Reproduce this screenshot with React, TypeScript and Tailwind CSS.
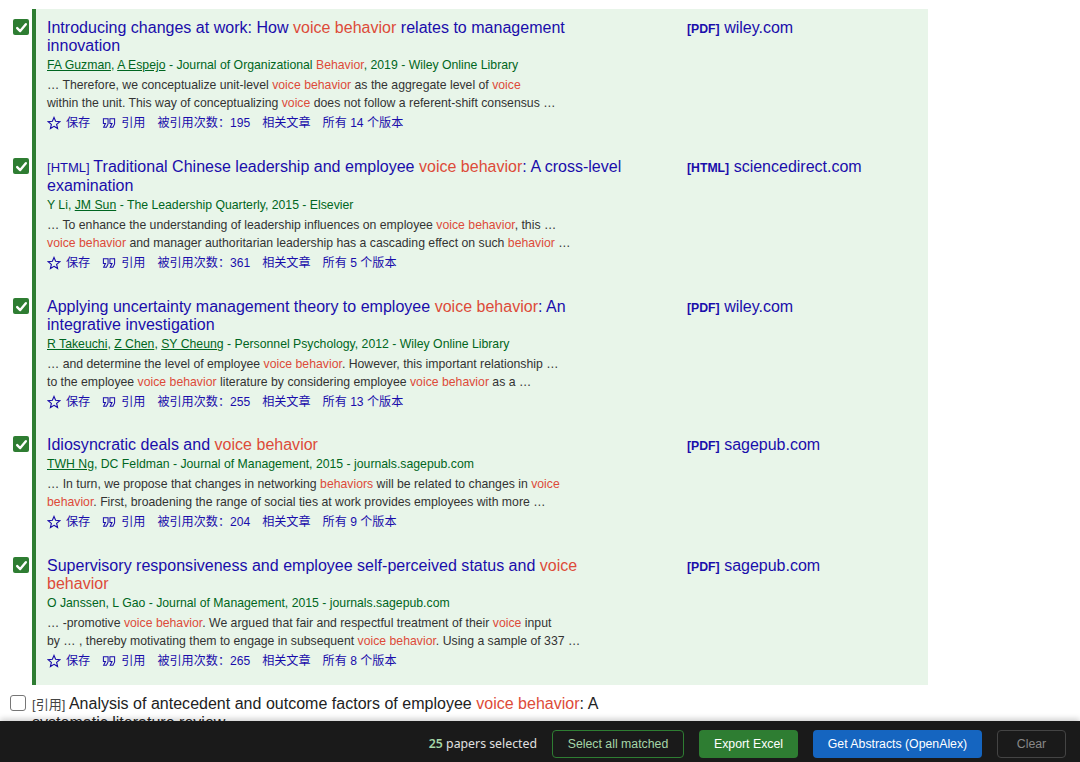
const FONT = "font-['Liberation_Sans','Noto_Sans_CJK_SC',sans-serif]";

type Part = string | { hl: string } | { u: string };

interface Paper {
  tag?: string;
  title: Part[];
  authors: Part[];
  line1: Part[];
  line2: Part[];
  cited: number;
  versions: number;
  kind: string;
  site: string;
  pad: string;
}

const papers: Paper[] = [
  {
    title: ["Introducing changes at work: How ", { hl: "voice behavior" }, " relates to management innovation"],
    authors: [{ u: "FA Guzman" }, ", ", { u: "A Espejo" }, " - Journal of Organizational ", { hl: "Behavior" }, ", 2019 - Wiley Online Library"],
    line1: ["… Therefore, we conceptualize unit-level ", { hl: "voice behavior" }, " as the aggregate level of ", { hl: "voice" }],
    line2: ["within the unit. This way of conceptualizing ", { hl: "voice" }, " does not follow a referent-shift consensus …"],
    cited: 195,
    versions: 14,
    kind: "[PDF]",
    site: "wiley.com",
    pad: "pb-[16px]",
  },
  {
    tag: "[HTML]",
    title: ["Traditional Chinese leadership and employee ", { hl: "voice behavior" }, ": A cross-level examination"],
    authors: ["Y Li, ", { u: "JM Sun" }, " - The Leadership Quarterly, 2015 - Elsevier"],
    line1: ["… To enhance the understanding of leadership influences on employee ", { hl: "voice behavior" }, ", this …"],
    line2: [{ hl: "voice behavior" }, " and manager authoritarian leadership has a cascading effect on such ", { hl: "behavior" }, " …"],
    cited: 361,
    versions: 5,
    kind: "[HTML]",
    site: "sciencedirect.com",
    pad: "pb-[16px]",
  },
  {
    title: ["Applying uncertainty management theory to employee ", { hl: "voice behavior" }, ": An integrative investigation"],
    authors: [{ u: "R Takeuchi" }, ", ", { u: "Z Chen" }, ", ", { u: "SY Cheung" }, " - Personnel Psychology, 2012 - Wiley Online Library"],
    line1: ["… and determine the level of employee ", { hl: "voice behavior" }, ". However, this important relationship …"],
    line2: ["to the employee ", { hl: "voice behavior" }, " literature by considering employee ", { hl: "voice behavior" }, " as a …"],
    cited: 255,
    versions: 13,
    kind: "[PDF]",
    site: "wiley.com",
    pad: "pb-[15px]",
  },
  {
    title: ["Idiosyncratic deals and ", { hl: "voice behavior" }],
    authors: [{ u: "TWH Ng" }, ", DC Feldman - Journal of Management, 2015 - journals.sagepub.com"],
    line1: ["… In turn, we propose that changes in networking ", { hl: "behaviors" }, " will be related to changes in ", { hl: "voice" }],
    line2: [{ hl: "behavior" }, ". First, broadening the range of social ties at work provides employees with more …"],
    cited: 204,
    versions: 9,
    kind: "[PDF]",
    site: "sagepub.com",
    pad: "pb-[16px]",
  },
  {
    title: ["Supervisory responsiveness and employee self-perceived status and ", { hl: "voice behavior" }],
    authors: ["O Janssen, L Gao - Journal of Management, 2015 - journals.sagepub.com"],
    line1: ["… -promotive ", { hl: "voice behavior" }, ". We argued that fair and respectful treatment of their ", { hl: "voice" }, " input"],
    line2: ["by … , thereby motivating them to engage in subsequent ", { hl: "voice behavior" }, ". Using a sample of 337 …"],
    cited: 265,
    versions: 8,
    kind: "[PDF]",
    site: "sagepub.com",
    pad: "pb-[15px]",
  },
];

function Text({ parts }: { parts: Part[] }) {
  return (
    <>
      {parts.map((p, i) => {
        if (typeof p === "string") return <span key={i}>{p}</span>;
        if ("hl" in p) return <span key={i} className="text-[#dd4b39]">{p.hl}</span>;
        return <u key={i}>{p.u}</u>;
      })}
    </>
  );
}

function CheckMark() {
  return (
    <div className="flex h-4 w-4 items-center justify-center rounded-[2px] bg-[#2e7d32]">
      <svg className="h-[13px] w-[13px]" viewBox="0 0 12 12" fill="none" stroke="#fff" strokeWidth={2.2} strokeLinecap="round" strokeLinejoin="round">
        <path d="M2 6.5l2.8 2.8L10 3" />
      </svg>
    </div>
  );
}

function PaperRow({ paper }: { paper: Paper }) {
  return (
    <div className="flex">
      <div className="w-8 shrink-0 pl-[13px] pt-[10px]">
        <CheckMark />
      </div>
      <div className={`flex w-[896px] border-l-4 border-[#2e7d32] bg-[#e8f5e9] pl-[11px] pt-[10px] ${paper.pad}`}>
        <div className="w-[580px] shrink-0">
          <div className="text-[16px] leading-[18px] tracking-[0.015px] text-[#1a0dab]">
            {paper.tag && <span className="text-[13px]">{paper.tag} </span>}
            <Text parts={paper.title} />
          </div>
          <div className="mt-[1px] whitespace-nowrap text-[12.25px] leading-[18px] text-[#006621]">
            <Text parts={paper.authors} />
          </div>
          <div className="mt-[2px] whitespace-nowrap text-[12.25px] leading-[18px] text-[#333]">
            <div><Text parts={paper.line1} /></div>
            <div><Text parts={paper.line2} /></div>
          </div>
          <div className="mt-[2px] flex items-center gap-3 whitespace-nowrap text-[12.1px] leading-[18px] text-[#1a0dab]">
            <span className="flex items-center gap-[5px]">
              <svg className="h-[16px] w-[14px]" viewBox="0 0 15 16" fill="none" stroke="#1a0dab" strokeWidth={1.2}>
                <path d="M7.5 11.57l3.824 2.308-1.015-4.35 3.379-2.926-4.45-.378L7.5 2.122 5.761 6.224l-4.449.378 3.379 2.926-1.015 4.35z" />
              </svg>
              保存
            </span>
            <span className="flex items-center gap-[5px]">
              <svg className="h-[16px] w-[14px]" viewBox="0 0 15 16" fill="none" stroke="#1a0dab" strokeWidth={1.1}>
                <path d="M6.5 3.5H1.5V8.5H3.75L1.75 12.5H4.75L6.5 9V3.5zM13.5 3.5H8.5V8.5H10.75L8.75 12.5H11.75L13.5 9V3.5z" />
              </svg>
              引用
            </span>
            <span>被引用次数：{paper.cited}</span>
            <span>相关文章</span>
            <span>所有 {paper.versions} 个版本</span>
          </div>
        </div>
        <div className="ml-[60px] whitespace-nowrap text-[16px] leading-[18px] text-[#1a0dab]">
          <span className="text-[12.25px] font-bold">{paper.kind}</span> {paper.site}
        </div>
      </div>
    </div>
  );
}

export default function App() {
  return (
    <div className={`flex h-[762px] w-[1080px] flex-col overflow-hidden bg-white ${FONT}`}>
      <div className="min-h-0 flex-1 overflow-hidden pt-[9px]">
        {papers.map((p) => (
          <PaperRow key={p.site + p.cited} paper={p} />
        ))}
        <div className="flex pt-[10px]">
          <div className="w-8 shrink-0 pl-[10px]">
            <div className="h-4 w-4 rounded-[3px] border border-[#767676] bg-white" />
          </div>
          <div className="w-[590px] text-[16px] leading-[18px] tracking-[0.015px] text-[#222]">
            <span className="text-[13px] text-[#444]">[引用] </span>
            Analysis of antecedent and outcome factors of employee <span className="text-[#dd4b39]">voice behavior</span>: A systematic literature review
          </div>
        </div>
      </div>
      <div className="relative z-10 flex h-[41px] shrink-0 items-center justify-end gap-[15px] bg-[#1a1a1a] pr-[14px] pt-[5px] text-[12.3px] shadow-[0_-2px_6px_rgba(0,0,0,0.2)]">
        <span className="font-['Noto_Sans',sans-serif] text-[#e0e0e0]">
          <span className="font-semibold text-[#a5d6a7]">25</span> papers selected
        </span>
        <button className="h-[28px] w-[132px] rounded border border-[#2e7d32] text-[#a5d6a7]">Select all matched</button>
        <button className="h-[28px] w-[99px] rounded bg-[#2e7d32] text-white">Export Excel</button>
        <button className="h-[28px] w-[169px] rounded bg-[#1565c0] text-white">Get Abstracts (OpenAlex)</button>
        <button className="h-[28px] w-[69px] rounded border border-[#444] text-[#888]">Clear</button>
      </div>
    </div>
  );
}
